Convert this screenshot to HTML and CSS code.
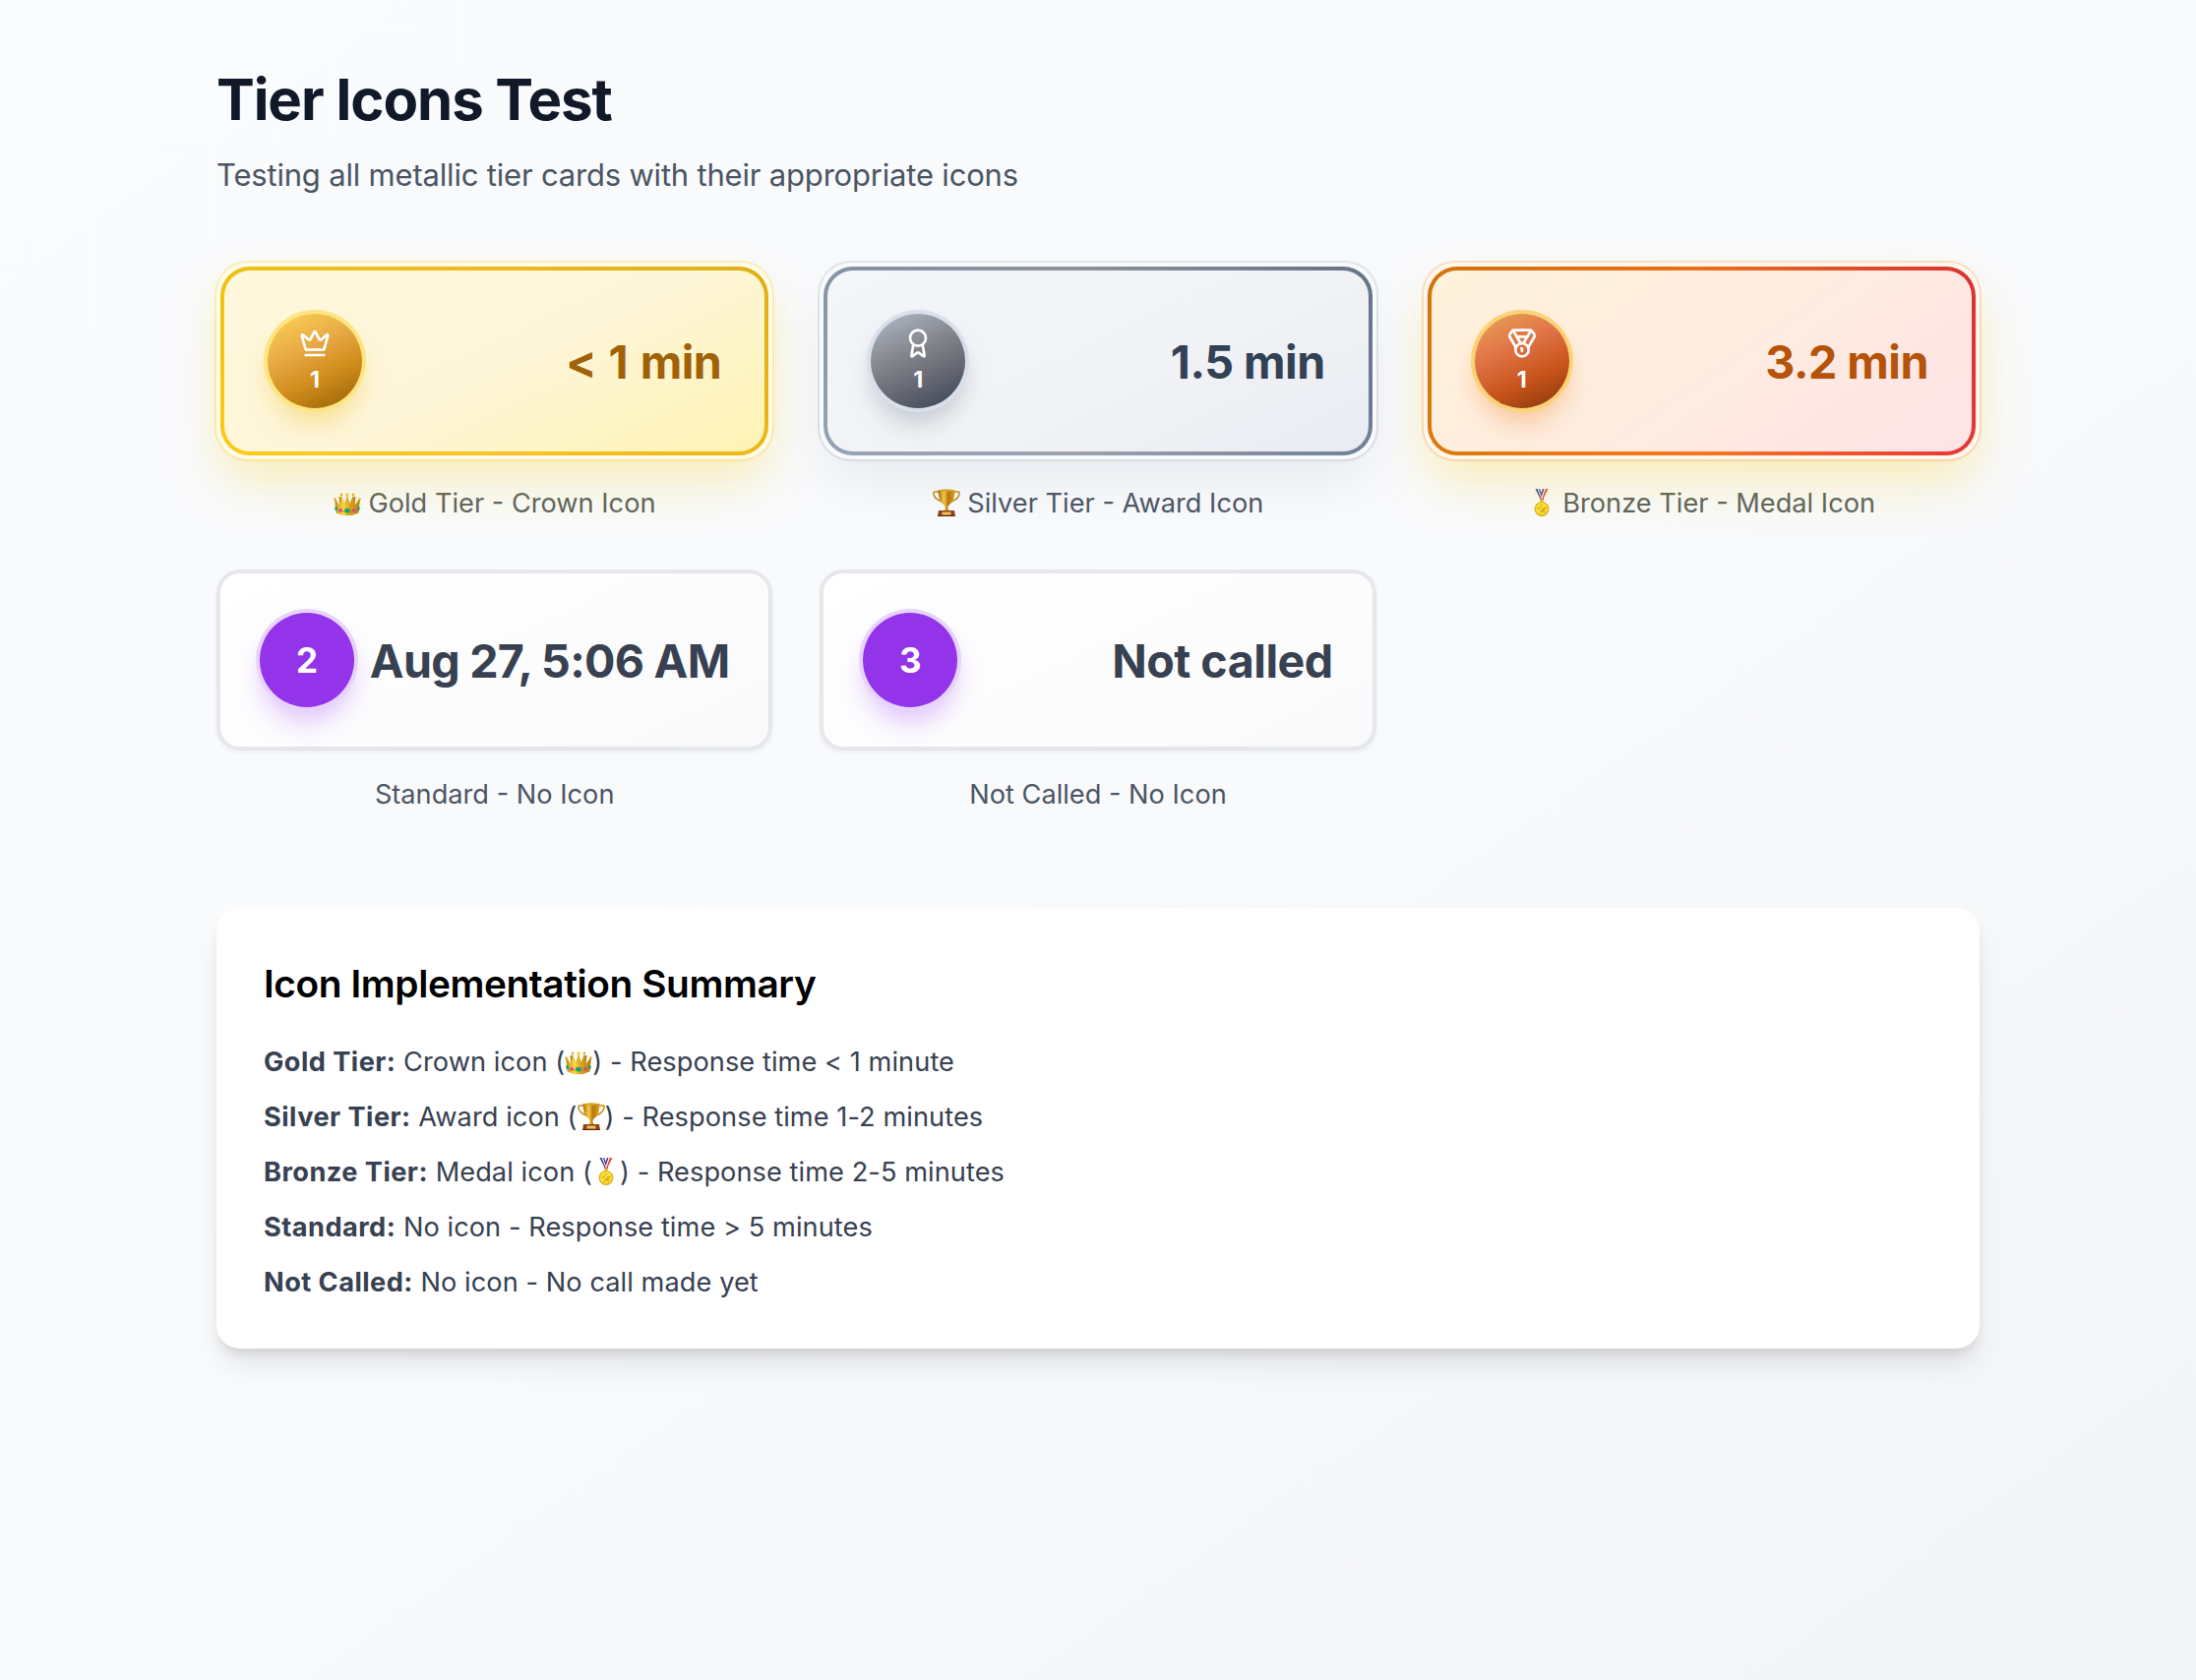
FILE: index.html
```html
<!DOCTYPE html>
<html lang="en">
<head>
<meta charset="utf-8">
<title>Tier Icons Test</title>
<link rel="stylesheet" href="styles.css">
</head>
<body>
<svg class="sprite" aria-hidden="true">
  <defs>
    <linearGradient id="metal" x1="0" y1="0" x2="1" y2="0">
      <stop offset="0" stop-color="#c98a10"/><stop offset=".35" stop-color="#f7d648"/><stop offset=".6" stop-color="#d9a21c"/><stop offset="1" stop-color="#b87a0c"/>
    </linearGradient>
    <linearGradient id="cup" x1="0" y1="0" x2="1" y2="0">
      <stop offset="0" stop-color="#a86a08"/><stop offset=".35" stop-color="#f6cb45"/><stop offset=".6" stop-color="#b87708"/><stop offset="1" stop-color="#dc9d20"/>
    </linearGradient>
  </defs>
  <symbol id="emoji-crown" viewBox="0 0 28 28">
    <path d="M7 23 5.500 8h2L11 17l2.500-9h1L17 17l3.500-9h2L21 23z" fill="#b97f0c"/>
    <path d="M2.600 24.500 1 10.500l1-.3L6.500 17 8 6.500 12 16l2-11 2 11 4-9.500L21.500 17 26 10.200l1 .3-1.600 14Q14 30 2.600 24.500z" fill="url(#metal)"/>
    <path d="M3 21.500q11 3.500 22 0" fill="none" stroke="#b67c10" stroke-width=".7"/>
    <circle cx="14" cy="6" r="1.800" fill="#f2cf3c"/><circle cx="8" cy="6" r="1.400" fill="#ddb02d"/><circle cx="20" cy="6" r="1.400" fill="#ddb02d"/>
    <circle cx="1.500" cy="10.500" r="1.300" fill="#ddb02d"/><circle cx="26.500" cy="10.500" r="1.300" fill="#ddb02d"/>
    <ellipse cx="14" cy="22.200" rx="2.800" ry="2.400" fill="#12a277"/><ellipse cx="2.600" cy="20" rx="1.400" ry="2" fill="#12a277"/><ellipse cx="25.400" cy="20" rx="1.400" ry="2" fill="#12a277"/>
    <circle cx="7.300" cy="21.800" r="1.700" fill="#d63fae"/><circle cx="20.700" cy="21.800" r="1.700" fill="#d63fae"/>
  </symbol>
  <symbol id="emoji-trophy" viewBox="0 0 28 28">
    <path d="M7 3H2q-1.500 0-1 2.500C2 10 6 12 10.500 13.500M21 3h5q1.500 0 1 2.500C26 10 22 12 17.500 13.500" fill="none" stroke="#c58a18" stroke-width="1.500"/>
    <path d="M5.500 1h17q0 11-5.500 15-1.800 1.500-1.600 4l1.600 3h-6l1.600-3q.2-2.500-1.600-4Q5.500 12 5.500 1z" fill="url(#cup)"/>
    <ellipse cx="14" cy="1.500" rx="8.500" ry="1.200" fill="#d9a528"/>
    <path d="M6 22h16l1 6H5z" fill="#8c4214"/><path d="M9.500 23.500h9v3h-9z" fill="#efc060"/><path d="M5 27h18v1H5z" fill="#5f260c"/>
  </symbol>
  <symbol id="emoji-medal" viewBox="0 0 28 28">
    <path d="M7.500 0h4.500l4 11h-3z" fill="#353a86"/><path d="M9.500 0h1.300l3.700 10h-1z" fill="#f4f2f5"/>
    <path d="M20.500 0H16l-4 11h3z" fill="#e8453f"/><path d="M16 0h2l-3.700 10h-1.200z" fill="#f4f2f5"/><path d="M15 0h1.500l-2.600 7-.8-2z" fill="#353a86"/>
    <circle cx="14" cy="12.300" r="1.700" fill="#d9b64a"/>
    <circle cx="14" cy="20.500" r="7.400" fill="#d5a80f"/><circle cx="14" cy="20.200" r="6.400" fill="#f7dc2d"/>
    <path d="m14.500 15.500 1.200 3.300 3.500.2-2.800 2.200.9 3.500-3-1.700-3.800 2 1.200-3.700-2.700-1.800 3.700-.4z" fill="#d9ac12"/>
    <path d="m10 24 7-8" stroke="#fff27a" stroke-width="1.200"/>
  </symbol>
</svg>

<main class="page">
  <header class="intro">
    <h1>Tier Icons Test</h1>
    <p>Testing all metallic tier cards with their appropriate icons</p>
  </header>

  <section class="tiers">
    <div class="tier">
      <div class="frame frame-gold"><div class="card card-metal card-gold">
        <div class="badge badge-gold">
          <svg class="icon" viewBox="0 0 24 24"><path d="M11.562 3.266a.5.5 0 0 1 .876 0L15.390 8.870a1 1 0 0 0 1.516.294L21.183 5.500a.5.5 0 0 1 .798.519l-2.834 10.246a1 1 0 0 1-.956.734H5.810a1 1 0 0 1-.957-.734L2.020 6.020a.5.5 0 0 1 .798-.519l4.276 3.664a1 1 0 0 0 1.516-.294z"/><path d="M5 21h14"/></svg>
          <span class="rank">1</span>
        </div>
        <span class="time">&lt; 1 min</span>
      </div></div>
      <p class="caption"><svg class="emoji"><use href="#emoji-crown"/></svg> Gold Tier - Crown Icon</p>
    </div>

    <div class="tier">
      <div class="frame frame-silver"><div class="card card-metal card-silver">
        <div class="badge badge-silver">
          <svg class="icon" viewBox="0 0 24 24"><path d="m15.477 12.890 1.515 8.526a.5.5 0 0 1-.81.47l-3.580-2.687a1 1 0 0 0-1.197 0l-3.586 2.686a.5.5 0 0 1-.81-.469l1.514-8.526"/><circle cx="12" cy="8" r="6"/></svg>
          <span class="rank">1</span>
        </div>
        <span class="time">1.5 min</span>
      </div></div>
      <p class="caption"><svg class="emoji"><use href="#emoji-trophy"/></svg> Silver Tier - Award Icon</p>
    </div>

    <div class="tier">
      <div class="frame frame-bronze"><div class="card card-metal card-bronze">
        <div class="badge badge-bronze">
          <svg class="icon" viewBox="0 0 24 24"><path d="M7.210 15 2.660 7.140a2 2 0 0 1 .13-2.200L4.400 2.800A2 2 0 0 1 6 2h12a2 2 0 0 1 1.600.8l1.600 2.140a2 2 0 0 1 .14 2.200L16.790 15"/><path d="M11 12 5.120 2.200"/><path d="m13 12 5.880-9.800"/><path d="M8 7h8"/><circle cx="12" cy="17" r="5"/><path d="M12 18v-2h-.5"/></svg>
          <span class="rank">1</span>
        </div>
        <span class="time">3.2 min</span>
      </div></div>
      <p class="caption"><svg class="emoji"><use href="#emoji-medal"/></svg> Bronze Tier - Medal Icon</p>
    </div>

    <div class="tier">
      <div class="card card-plain">
        <div class="badge badge-plain">2</div>
        <span class="time time-date">Aug 27, 5:06 AM</span>
      </div>
      <p class="caption">Standard - No Icon</p>
    </div>

    <div class="tier">
      <div class="card card-plain">
        <div class="badge badge-plain">3</div>
        <span class="time">Not called</span>
      </div>
      <p class="caption">Not Called - No Icon</p>
    </div>
  </section>

  <section class="summary">
    <h2>Icon Implementation Summary</h2>
    <ul>
      <li><strong>Gold Tier:</strong> Crown icon (<svg class="emoji"><use href="#emoji-crown"/></svg>) - Response time &lt; 1 minute</li>
      <li><strong>Silver Tier:</strong> Award icon (<svg class="emoji"><use href="#emoji-trophy"/></svg>) - Response time 1-2 minutes</li>
      <li><strong>Bronze Tier:</strong> Medal icon (<svg class="emoji"><use href="#emoji-medal"/></svg>) - Response time 2-5 minutes</li>
      <li><strong>Standard:</strong> No icon - Response time &gt; 5 minutes</li>
      <li><strong>Not Called:</strong> No icon - No call made yet</li>
    </ul>
  </section>
</main>
</body>
</html>
```
FILE: styles.css
```css
* { box-sizing: border-box; margin: 0; padding: 0; }

body {
  min-height: 1708px;
  font-family: Inter, "Liberation Sans", sans-serif;
  color: #000;
  background: linear-gradient(145deg, #f9fbfd 0%, #f9fafc 50%, #f3f4f6 100%);
}

.sprite { position: absolute; width: 0; height: 0; }

.page { width: 1792px; margin: 0 auto; padding-top: 64px; }

.intro { margin-bottom: 64px; }
.intro h1 { padding-top: 1px; font-size: 58.200px; line-height: 72px; font-weight: 700; letter-spacing: -1.120px; color: #111827; margin-bottom: 15px; }
.intro p { font-size: 31px; line-height: 51px; letter-spacing: -.190px; color: #4b5563; }

.tiers { display: grid; grid-template-columns: repeat(3, 1fr); gap: 48px; margin-bottom: 96px; }

/* Metallic cards: a pale frame with a hairline ring around a gradient-bordered card */
.frame { position: relative; z-index: 1; padding: 4px; border-radius: 32px; }
.frame-gold { background: #fefbe8; box-shadow: 0 0 0 2px rgba(250, 204, 21, .25), 0 28px 54px -8px rgba(250, 204, 21, .3), 0 8px 40px rgba(250, 204, 21, .04); }
.frame-silver { background: #f8fafc; box-shadow: 0 0 0 2px rgba(148, 163, 184, .25), 0 28px 54px -8px rgba(148, 163, 184, .18); }
.frame-bronze { background: #fff7ed; box-shadow: 0 0 0 2px rgba(249, 115, 22, .2), 0 28px 54px -8px rgba(250, 204, 21, .3), 0 8px 40px rgba(250, 204, 21, .04); }

.card { display: flex; align-items: center; justify-content: space-between; }
.card-metal { height: 192px; padding: 0 44px; border: 4px solid transparent; border-radius: 30px; }
.card-gold {
  background:
    linear-gradient(155deg, #fff8dc 0%, #fef6d9 50%, #fef3b4 100%) padding-box,
    linear-gradient(rgba(0, 0, 0, .05), rgba(0, 0, 0, 0)) border-box,
    linear-gradient(90deg, #facc15, #fcc225 50%, #eab815) border-box;
}
.card-silver {
  background:
    linear-gradient(155deg, #f3f6fa 0%, #f2f3f5 50%, #e8ecf2 100%) padding-box,
    linear-gradient(rgba(0, 0, 0, .1), rgba(0, 0, 0, 0)) border-box,
    linear-gradient(90deg, #94a3b8, #9ca3af 45%, #708097) border-box;
}
.card-bronze {
  background:
    linear-gradient(145deg, #fff3dc 0%, #feece0 50%, #fde3e6 100%) padding-box,
    linear-gradient(rgba(0, 0, 0, .06), rgba(0, 0, 0, 0)) border-box,
    linear-gradient(90deg, #dd7a0a, #fb761e 50%, #e73535) border-box;
}
.card-plain {
  height: 184px;
  padding: 0 40px;
  border: 4px solid #e5e7eb;
  border-radius: 24px;
  background: linear-gradient(155deg, #fff, #f9fafb);
  box-shadow: 0 2px 4px rgba(0, 0, 0, .06);
}

.badge {
  display: flex; flex-direction: column; align-items: center; justify-content: center;
  flex: none; width: 96px; height: 96px; border-radius: 50%; color: #fff;
}
.badge-gold {
  background: linear-gradient(155deg, #fbd055 5%, #e7a945 38%, #d08c1b 65%, #9c6605 95%);
  box-shadow: 0 0 0 4px #fde580, 0 16px 26px -2px rgba(234, 179, 8, .35);
}
.badge-silver {
  background: linear-gradient(155deg, #abb7c6 5%, #87898f 38%, #6c6d77 62%, #3d4859 95%);
  box-shadow: 0 0 0 4px #d9e0e9, 0 16px 26px -2px rgba(100, 116, 139, .35);
}
.badge-bronze {
  background: linear-gradient(155deg, #e6a052 5%, #e2774a 34%, #c9541c 66%, #8b3a0b 95%);
  box-shadow: 0 0 0 4px #fbd274, 0 16px 26px -2px rgba(234, 120, 20, .35);
}
.badge-plain {
  font-size: 35px; font-weight: 700;
  background: #9333ea;
  box-shadow: 0 0 0 4px #e6d4fd, 0 16px 26px -2px rgba(168, 85, 247, .35);
}

.icon { width: 32px; height: 32px; margin-bottom: 4px; fill: none; stroke: #fff; stroke-width: 2; stroke-linecap: round; stroke-linejoin: round; }
.rank { height: 32px; font-size: 23.300px; line-height: 34px; font-weight: 700; }

.time { padding-top: 2px; font-size: 46.600px; line-height: 64px; font-weight: 700; letter-spacing: -.500px; white-space: nowrap; color: #374151; }
.time-date { letter-spacing: -.720px; }
.card-gold .time { color: #a16207; word-spacing: 2px; }
.card-silver .time { color: #334155; }
.card-bronze .time { color: #b45309; }

.caption { margin-top: 24px; height: 40px; font-size: 27.200px; line-height: 42px; text-align: center; color: #4b5563; }
.emoji { display: inline-block; width: 28px; height: 28px; vertical-align: -3.500px; overflow: visible; }

.frame-gold + .caption, .frame-bronze + .caption { color: #59615f; }

.summary {
  padding: 48px;
  border-radius: 24px;
  background: #fff;
  box-shadow: 0 20px 30px -6px rgba(0, 0, 0, .1), 0 8px 12px -4px rgba(0, 0, 0, .1);
}
.summary h2 { height: 56px; font-size: 38.800px; line-height: 58px; font-weight: 600; letter-spacing: -.400px; margin-bottom: 32px; }
.summary ul { display: grid; gap: 16px; list-style: none; }
.summary li { height: 40px; font-size: 27.200px; line-height: 42px; letter-spacing: .060px; color: #374151; }
.summary strong { font-weight: 700; letter-spacing: .450px; }
```
